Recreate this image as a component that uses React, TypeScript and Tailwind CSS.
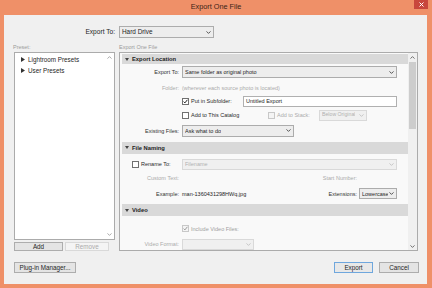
import clsx from 'clsx';

const Chev = ({ c = '#555' }: { c?: string }) => (
  <svg width="5" height="3" viewBox="0 0 5 3" className="shrink-0">
    <path d="M0.5 0.4 L2.5 2.4 L4.5 0.4" stroke={c} fill="none" strokeWidth="0.9" />
  </svg>
);

const ChevUp = ({ c = '#888' }: { c?: string }) => (
  <svg width="5" height="3" viewBox="0 0 5 3" className="shrink-0">
    <path d="M0.5 2.6 L2.5 0.6 L4.5 2.6" stroke={c} fill="none" strokeWidth="0.9" />
  </svg>
);

const Select = ({ text, disabled, className }: { text?: string; disabled?: boolean; className?: string }) => (
  <div
    className={clsx(
      'flex items-center justify-between border pl-[2px] pr-[2px] gap-[1px]',
      disabled ? 'border-[#d9d9d9] bg-[#f0f0f0] text-[#b0b0b0]' : 'border-[#acacac] bg-[#ededed] text-[#1e1e1e]',
      className
    )}
  >
    <span className="whitespace-nowrap overflow-hidden">{text}</span>
    <Chev c={disabled ? '#c2c2c2' : '#444'} />
  </div>
);

const Check = ({ checked, disabled }: { checked?: boolean; disabled?: boolean }) => (
  <div
    className={clsx(
      'w-[7px] h-[7px] border flex items-center justify-center shrink-0',
      disabled ? 'border-[#c8c8c8] bg-[#f4f4f4]' : 'border-[#707070] bg-white'
    )}
  >
    {checked && (
      <svg width="5" height="5" viewBox="0 0 5 5">
        <path d="M0.6 2.6 L1.9 3.9 L4.4 0.8" stroke={disabled ? '#9a9a9a' : '#222'} fill="none" strokeWidth="1" />
      </svg>
    )}
  </div>
);

const Header = ({ title }: { title: string }) => (
  <div className="h-[12px] bg-[#d9d9d9] flex items-center pl-[3px] gap-[3px] text-[5.8px] font-bold text-[#222]">
    <svg width="4" height="3" viewBox="0 0 4 3">
      <path d="M0 0 L4 0 L2 3 Z" fill="#444" />
    </svg>
    <span>{title}</span>
  </div>
);

const Label = ({ children, gray }: { children: React.ReactNode; gray?: boolean }) => (
  <div className={clsx('w-[57px] text-right shrink-0', gray ? 'text-[#ababab]' : 'text-[#333]')}>{children}</div>
);

const Btn = ({ children, className, disabled, primary }: { children: React.ReactNode; className?: string; disabled?: boolean; primary?: boolean }) => (
  <div
    className={clsx(
      'flex items-center justify-center border text-[6.3px]',
      disabled
        ? 'border-[#d9d9d9] bg-[#f4f4f4] text-[#ababab]'
        : primary
        ? 'border-[#6fa7dd] bg-[#e8e8e8] text-[#1e1e1e]'
        : 'border-[#adadad] bg-[#e4e4e4] text-[#1e1e1e]',
      className
    )}
  >
    {children}
  </div>
);

const TreeItem = ({ label }: { label: string }) => (
  <div className="h-[11px] flex items-center pl-[6px] gap-[3px] text-[6.3px] text-[#1e1e1e]">
    <svg width="4" height="5" viewBox="0 0 4 5">
      <path d="M0 0 L4 2.5 L0 5 Z" fill="#333" />
    </svg>
    <span>{label}</span>
  </div>
);

export default function App() {
  return (
    <div className="w-[432px] h-[288px] bg-[#ef9068] flex flex-col overflow-hidden font-['Liberation_Sans',sans-serif]">
      {/* Title bar */}
      <div className="relative h-[15px] flex items-center justify-center text-[7.3px] text-[#3b2418]">
        Export One File
        <div className="absolute right-[4px] top-0 w-[14px] h-[9px] bg-[#c8473d] flex items-center justify-center">
          <svg width="5" height="5" viewBox="0 0 5 5">
            <path d="M0.5 0.5 L4.5 4.5 M4.5 0.5 L0.5 4.5" stroke="#fff" strokeWidth="1" />
          </svg>
        </div>
      </div>

      <div className="ml-[4px] mr-[5px] mb-[4px] flex-1 bg-[#f0f0f0] flex flex-col">
        {/* Export To */}
        <div className="mt-[11px] h-[12px] flex items-center">
          <div className="w-[111px] text-right text-[6.6px] text-[#1e1e1e]">Export To:</div>
          <Select text="Hard Drive" className="ml-[4px] w-[95px] h-[12px] text-[6.4px]" />
        </div>

        {/* Column labels */}
        <div className="mt-[5px] h-[8px] flex items-center text-[5.5px] text-[#9b9b9b]">
          <div className="pl-[9px] w-[115px]">Preset:</div>
          <div>Export One File</div>
        </div>

        {/* Main */}
        <div className="mt-[1px] h-[199px] flex">
          {/* Presets */}
          <div className="ml-[10px] w-[101px] flex flex-col">
            <div className="h-[188px] border border-[#ababab] bg-white flex">
              <div className="flex-1 pt-[1px]">
                <TreeItem label="Lightroom Presets" />
                <TreeItem label="User Presets" />
              </div>
              <div className="w-[9px] flex flex-col justify-between items-center py-[3px]">
                <ChevUp c="#a0a0a0" />
                <Chev c="#a0a0a0" />
              </div>
            </div>
            <div className="mt-[2px] h-[9px] flex gap-[2px]">
              <Btn className="w-[49px]">Add</Btn>
              <Btn className="w-[44px]" disabled>Remove</Btn>
            </div>
          </div>

          {/* Export settings */}
          <div className="ml-[4px] w-[299px] border border-[#ababab] bg-[#f9f9f9] flex overflow-hidden">
            <div className="flex-1 pl-[2px] pt-[1px] flex flex-col text-[5.5px] overflow-hidden">
              <Header title="Export Location" />
              <div className="mt-[2px] h-[12px] flex items-center">
                <Label>Export To:</Label>
                <Select text="Same folder as original photo" className="ml-[3px] w-[215px] h-[12px]" />
              </div>
              <div className="mt-[6px] h-[10px] flex items-center text-[#ababab]">
                <Label gray>Folder:</Label>
                <span className="ml-[3px]">(wherever each source photo is located)</span>
              </div>
              <div className="mt-[3px] h-[11px] flex items-center">
                <div className="w-[57px]" />
                <div className="ml-[3px] w-[61px] flex items-center gap-[2px] text-[#2a2a2a]">
                  <Check checked />
                  <span>Put in Subfolder:</span>
                </div>
                <div className="w-[154px] h-[11px] border border-[#b0b0b0] bg-white flex items-center pl-[2px] text-[#1e1e1e]">
                  Untitled Export
                </div>
              </div>
              <div className="mt-[3px] h-[11px] flex items-center">
                <div className="w-[57px]" />
                <div className="ml-[3px] w-[86px] flex items-center gap-[2px] text-[#2a2a2a]">
                  <Check />
                  <span>Add to This Catalog</span>
                </div>
                <div className="w-[51px] flex items-center gap-[2px] text-[#ababab]">
                  <Check disabled />
                  <span>Add to Stack:</span>
                </div>
                <Select text="Below Original" disabled className="w-[48px] h-[11px] text-[5.2px]" />
              </div>
              <div className="mt-[4px] h-[12px] flex items-center">
                <Label>Existing Files:</Label>
                <Select text="Ask what to do" className="ml-[3px] w-[112px] h-[12px]" />
              </div>

              <div className="mt-[5px]">
                <Header title="File Naming" />
              </div>
              <div className="mt-[5px] h-[11px] flex items-center">
                <div className="w-[60px] pl-[10px] flex items-center gap-[2px] text-[#2a2a2a]">
                  <Check />
                  <span>Rename To:</span>
                </div>
                <Select text="Filename" disabled className="w-[215px] h-[11px]" />
              </div>
              <div className="mt-[4px] h-[10px] flex items-center text-[#ababab]">
                <Label gray>Custom Text:</Label>
                <div className="flex-1" />
                <span className="mr-[51px]">Start Number:</span>
              </div>
              <div className="mt-[6px] h-[11px] flex items-center">
                <Label>Example:</Label>
                <span className="ml-[3px] text-[#1e1e1e]">man-1360431298HWq.jpg</span>
                <div className="flex-1" />
                <span className="text-[#333]">Extensions:</span>
                <Select text="Lowercase" className="ml-[2px] mr-[11px] w-[38px] h-[11px]" />
              </div>

              <div className="mt-[5px]">
                <Header title="Video" />
              </div>
              <div className="mt-[8px] h-[10px] flex items-center">
                <div className="w-[57px]" />
                <div className="ml-[3px] flex items-center gap-[2px] text-[#9f9f9f]">
                  <Check checked disabled />
                  <span>Include Video Files:</span>
                </div>
              </div>
              <div className="mt-[6px] h-[11px] flex items-center shrink-0">
                <Label gray>Video Format:</Label>
                <Select disabled className="ml-[3px] w-[72px] h-[11px]" />
              </div>
            </div>

            {/* Scrollbar */}
            <div className="w-[9px] bg-[#f0f0f0] flex flex-col items-center">
              <div className="h-[8px] flex items-center">
                <ChevUp c="#606060" />
              </div>
              <div className="mt-[1px] w-[7px] h-[67px] bg-[#cdcdcd]" />
              <div className="flex-1" />
              <div className="h-[8px] flex items-center">
                <Chev c="#606060" />
              </div>
            </div>
          </div>
        </div>

        {/* Bottom buttons */}
        <div className="mt-[11px] h-[11px] flex">
          <Btn className="ml-[10px] w-[62px]">Plug-in Manager...</Btn>
          <div className="flex-1" />
          <Btn className="w-[39px]" primary>Export</Btn>
          <Btn className="ml-[6px] mr-[8px] w-[40px]">Cancel</Btn>
        </div>
      </div>
    </div>
  );
}
